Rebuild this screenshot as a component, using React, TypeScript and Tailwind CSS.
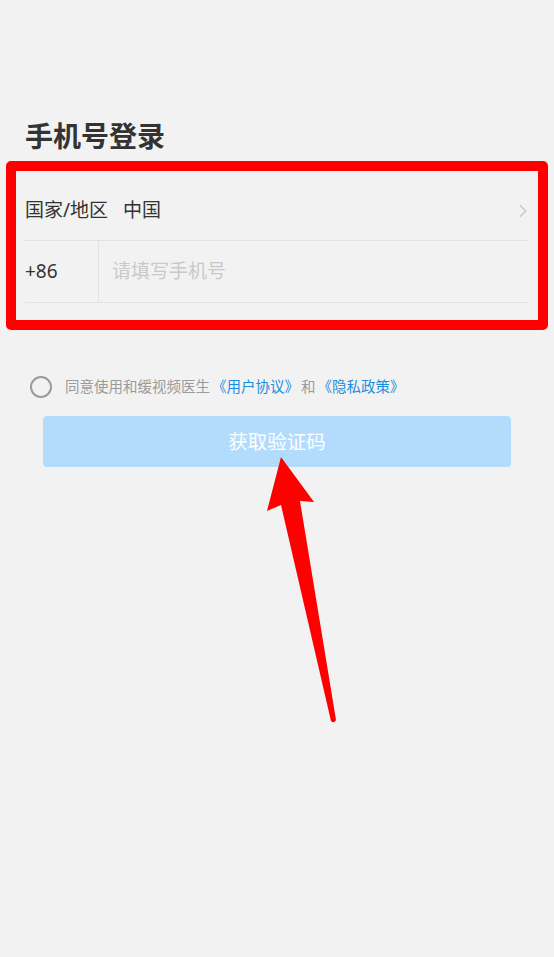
import { ChevronRight } from "lucide-react";

const font = { fontFamily: '"Noto Sans", "Noto Sans CJK SC", sans-serif' };

export default function App() {
  return (
    <div className="relative min-h-[957px] w-full overflow-hidden bg-[#f2f2f2] text-[#333]" style={font}>
      <div className="px-[25px] pt-[117px]">
        <h1 className="text-[28px] font-bold leading-[38px] text-[#333]">手机号登录</h1>

        <div className="mt-[26px]">
          <div className="flex h-[60px] items-center justify-between border-b border-[#e2e2e2]">
            <div className="flex items-center gap-[15px] text-[19px]">
              <span>国家/地区</span>
              <span>中国</span>
            </div>
            <ChevronRight className="-mr-[5px] h-[22px] w-[22px] text-[#c8c8c8]" strokeWidth={1.5} />
          </div>
          <div className="flex h-[62px] items-center border-b border-[#e2e2e2]">
            <span className="w-[73px] text-[19px]">+86</span>
            <div className="h-full border-l border-[#e2e2e2]" />
            <span className="pl-[13px] text-[19px] text-[#c9c9c9]">请填写手机号</span>
          </div>
        </div>
      </div>

      <div className="mt-[73px] flex items-center gap-[13px] pl-[30px]">
        <span className="h-[22px] w-[22px] rounded-full border-2 border-[#9a9a9a]" />
        <p className="text-[14.5px] text-[#9a9a9a]">
          同意使用和缓视频医生<span className="ml-[2px] text-[#1a8ee0]">《用户协议》</span>
          <span className="mx-[2px]">和</span>
          <span className="text-[#1a8ee0]">《隐私政策》</span>
        </p>
      </div>

      <div className="mx-[43px] mt-[18px] flex h-[51px] items-center justify-center rounded-[4px] bg-[#b3dcfc] text-[19.5px] text-white">
        获取验证码
      </div>

      {/* annotation overlay */}
      <div className="pointer-events-none absolute left-[6px] top-[161px] h-[169px] w-[542px] rounded-[5px] border-[10px] border-[#ff0000]" />
      <svg className="pointer-events-none absolute left-0 top-0" width="554" height="957">
        <path
          d="M281 457 L314 502 L300 501 L336 720 Q334 724 331 721 L281 505 L267 511 Z"
          fill="#ff0000"
        />
      </svg>
    </div>
  );
}
